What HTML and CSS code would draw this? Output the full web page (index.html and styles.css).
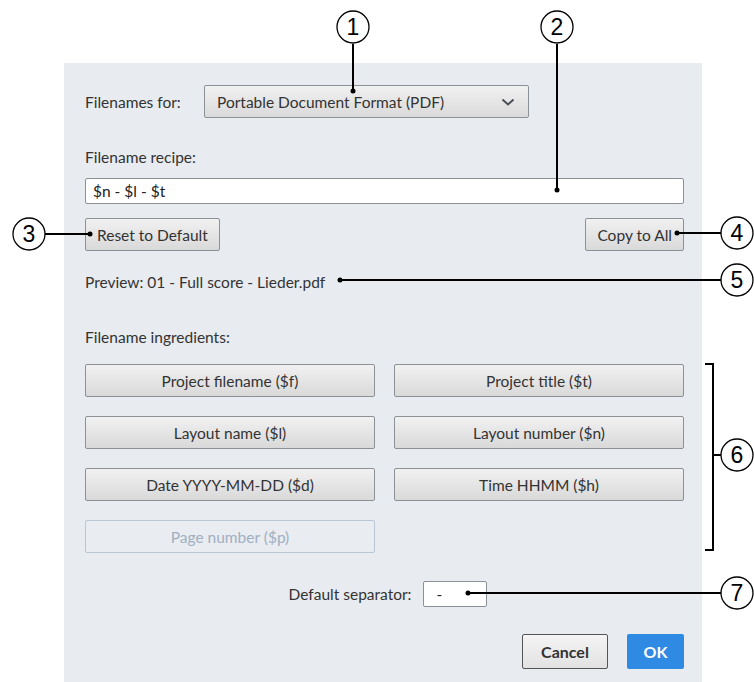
FILE: index.html
```html
<!DOCTYPE html>
<html lang="en">

<head>
  <meta charset="UTF-8" />
  <title>Filename Recipe</title>
  <link rel="stylesheet" href="styles.css">
</head>

<body>

  <div class="page">
    <div class="dialog">
      <div class="row-for">
        <span class="label">Filenames for:</span>
        <div class="select">
          <span>Portable Document Format (PDF)</span>
          <svg class="chevron" width="14" height="8" viewBox="0 0 14 8">
            <path d="M1.5 1.5 L7 6.5 L12.5 1.5" fill="none" stroke="#4a4f57" stroke-width="2" />
          </svg>
        </div>
      </div>

      <div class="label recipe-label">Filename recipe:</div>
      <div class="text-input recipe">$n - $l - $t</div>

      <div class="row-actions">
        <button class="btn">Reset to Default</button>
        <button class="btn">Copy to All</button>
      </div>

      <div class="preview">Preview: 01 - Full score - Lieder.pdf</div>

      <div class="label ingredients-label">Filename ingredients:</div>
      <div class="ingredients">
        <button class="btn">Project filename ($f)</button>
        <button class="btn">Project title ($t)</button>
        <button class="btn">Layout name ($l)</button>
        <button class="btn">Layout number ($n)</button>
        <button class="btn">Date YYYY-MM-DD ($d)</button>
        <button class="btn">Time HHMM ($h)</button>
        <button class="btn disabled">Page number ($p)</button>
      </div>

      <div class="separator-row">
        <span class="label">Default separator:</span>
        <div class="text-input sep">-</div>
      </div>

      <div class="footer">
        <button class="btn cancel">Cancel</button>
        <button class="btn ok">OK</button>
      </div>
    </div>

    <!-- numbered callouts drawn over the dialog -->
    <svg class="callouts" width="754" height="682" viewBox="0 0 754 682">
      <g fill="none" stroke="#000" stroke-width="2">
        <line x1="353" y1="44" x2="353" y2="91" />
        <line x1="557" y1="44" x2="557" y2="190" />
        <line x1="45" y1="234" x2="90" y2="234" />
        <line x1="677" y1="233" x2="721" y2="233" />
        <line x1="340" y1="280" x2="721" y2="280" />
        <path d="M705 364 H713 V550 H705" />
        <line x1="713" y1="455" x2="721" y2="455" />
        <line x1="468" y1="593" x2="721" y2="593" />
      </g>
      <g fill="#000">
        <circle cx="353" cy="91" r="2.5" />
        <circle cx="557" cy="190" r="2.5" />
        <circle cx="90" cy="234" r="2.5" />
        <circle cx="677" cy="233" r="2.5" />
        <circle cx="340" cy="280" r="2.5" />
        <circle cx="468" cy="593" r="2.5" />
      </g>
      <g fill="#fff" stroke="#000" stroke-width="1.3">
        <circle cx="353" cy="27" r="16" />
        <circle cx="557" cy="27" r="16" />
        <circle cx="29" cy="234" r="16" />
        <circle cx="737" cy="233" r="16" />
        <circle cx="737" cy="280" r="16" />
        <circle cx="737" cy="455" r="16" />
        <circle cx="737" cy="593" r="16" />
      </g>
      <g class="num" text-anchor="middle">
        <text x="353" y="35">1</text>
        <text x="557" y="35">2</text>
        <text x="29" y="242">3</text>
        <text x="737" y="241">4</text>
        <text x="737" y="288">5</text>
        <text x="737" y="463">6</text>
        <text x="737" y="601">7</text>
      </g>
    </svg>
  </div>

</body>

</html>
```

FILE: styles.css
```css
* {
  margin: 0;
  padding: 0;
  box-sizing: border-box;
}

body {
  background: #fff;
  font-family: "Lato", "Liberation Sans", sans-serif;
  font-size: 15.5px;
  color: #333;
}

.page {
  position: relative;
  width: 754px;
  height: 682px;
  padding: 63px 0 0 64px;
}

.dialog {
  width: 638px;
  height: 619px;
  background: #e8ebef;
  padding: 22px 18px 0 21px;
}

.label {
  line-height: 18px;
  color: #333;
}

.row-for {
  display: flex;
  align-items: center;
  height: 33px;
}

.row-for .label {
  width: 119px;
}

.select {
  width: 325px;
  height: 33px;
  display: flex;
  align-items: center;
  justify-content: space-between;
  padding: 0 13px 0 12px;
  border: 1px solid #8c9198;
  border-radius: 2px;
  background: linear-gradient(#f1f1f1, #dadada);
  color: #333;
}

.recipe-label {
  margin-top: 30px;
}

.text-input {
  background: #fff;
  border: 1px solid #8c9198;
  border-radius: 2px;
  height: 26px;
  line-height: 24px;
  padding: 0 7px;
  color: #222;
}

.recipe {
  margin-top: 12px;
}

.row-actions {
  margin-top: 14px;
  display: flex;
  justify-content: space-between;
}

.btn {
  font-family: inherit;
  font-size: 15.5px;
  color: #333;
  height: 33px;
  padding: 0 11px;
  border: 1px solid #8c9198;
  border-radius: 2px;
  background: linear-gradient(#f1f1f1, #d9d9d9);
}

.preview {
  margin-top: 22px;
  line-height: 18px;
}

.ingredients-label {
  margin-top: 37px;
}

.ingredients {
  margin-top: 18px;
  display: grid;
  grid-template-columns: 290px 290px;
  column-gap: 19px;
  row-gap: 19px;
}

.ingredients .btn {
  width: 100%;
}

.btn.disabled {
  background: #e9ecf0;
  border-color: #b8c6d6;
  color: #9fb0c3;
}

.separator-row {
  margin-top: 28px;
  display: flex;
  align-items: center;
  justify-content: center;
  gap: 12px;
  padding-left: 7px;
}

.sep {
  width: 64px;
  padding: 0 12px;
}

.footer {
  margin-top: 27px;
  display: flex;
  justify-content: flex-end;
  gap: 19px;
}

.footer .btn {
  height: 35px;
  font-size: 16px;
  font-weight: bold;
}

.cancel {
  width: 86px;
  border-color: #555;
  background: linear-gradient(#f4f4f4, #e2e2e2);
}

.ok {
  width: 57px;
  border: none;
  background: #2f8ae4;
  color: #fff;
}

.callouts {
  position: absolute;
  top: 0;
  left: 0;
}

.num {
  font-family: "Liberation Sans", Arial, sans-serif;
  font-size: 23px;
  fill: #000;
}
```
